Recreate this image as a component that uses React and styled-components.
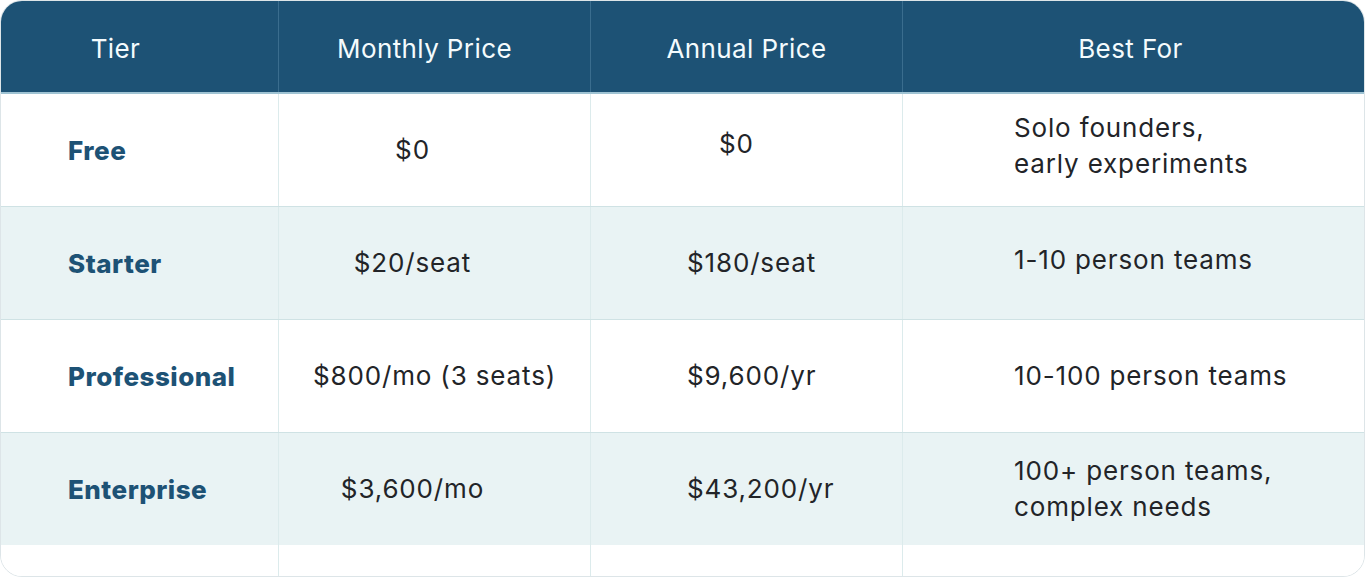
import React from "react";
import styled, { createGlobalStyle } from "styled-components";

const GlobalStyle = createGlobalStyle`
  html, body {
    margin: 0;
    padding: 0;
    background: #ffffff;
  }
  body {
    font-family: Inter, "Open Sans", "Liberation Sans", sans-serif;
    -webkit-font-smoothing: antialiased;
  }
`;

const COLS = "277px 312px 312px 1fr";

const rows = [
  { tier: "Free", monthly: "$0", annual: "$0", annualNudge: 32, annualLift: 12, best: ["Solo founders,", "early experiments"], bestLift: 8 },
  { tier: "Starter", monthly: "$20/seat", annual: "$180/seat", best: ["1-10 person teams"], bestLift: 6 },
  { tier: "Professional", monthly: "$800/mo (3 seats)", monthlyNudge: 27, annual: "$9,600/yr", best: ["10-100 person teams"] },
  { tier: "Enterprise", monthly: "$3,600/mo", annual: "$43,200/yr", best: ["100+ person teams,", "complex needs"] },
];

const Table = styled.div`
  width: 1365px;
  height: 577px;
  box-sizing: border-box;
  border: 1px solid #dde5e8;
  border-radius: 22px;
  overflow: hidden;
  display: flex;
  flex-direction: column;
  background: #ffffff;
`;

const HeadRow = styled.div`
  display: grid;
  grid-template-columns: ${COLS};
  height: 93px;
  flex: none;
  background: #1d5275;
  border-bottom: 2px solid #9fc3d3;
  box-sizing: border-box;
`;

const HeadCell = styled.div`
  display: flex;
  align-items: center;
  justify-content: center;
  padding-right: ${(p) => p.$shift || 0}px;
  padding-top: 4px;
  color: #f4fbfd;
  font-size: 26px;
  font-weight: 400;
  letter-spacing: 0.4px;
  & + & {
    border-left: 1px solid #3a6d8e;
  }
`;

const BodyRow = styled.div`
  display: grid;
  grid-template-columns: ${COLS};
  height: ${(p) => p.$h}px;
  flex: none;
  background: ${(p) => (p.$shaded ? "#e9f3f4" : "#ffffff")};
  border-top: ${(p) => (p.$first ? "none" : "1px solid #cfe2e4")};
  box-sizing: border-box;
`;

const Filler = styled(BodyRow)`
  flex: 1;
  border-top: none;
`;

const Cell = styled.div`
  display: flex;
  flex-direction: column;
  align-items: ${(p) => (p.$align === "center" ? "center" : "flex-start")};
  justify-content: center;
  padding-left: ${(p) => p.$pl || 0}px;
  padding-right: ${(p) => p.$pr || 0}px;
  padding-bottom: ${(p) => p.$lift || 0}px;
  & + & {
    border-left: 1px solid #dcebec;
  }
`;

const TierName = styled.span`
  color: #1d5275;
  font-size: 26px;
  font-weight: 800;
  letter-spacing: 0.5px;
  padding-top: 1px;
`;

const Value = styled.span`
  color: #222428;
  font-size: 26px;
  font-weight: 400;
  letter-spacing: 0.85px;
  line-height: 36px;
  white-space: nowrap;
`;

export default function App() {
  return (
    <>
      <GlobalStyle />
      <Table>
        <HeadRow>
          <HeadCell $shift={48}>Tier</HeadCell>
          <HeadCell $shift={20}>Monthly Price</HeadCell>
          <HeadCell>Annual Price</HeadCell>
          <HeadCell $shift={6}>Best For</HeadCell>
        </HeadRow>
        {rows.map((r, i) => (
          <BodyRow key={r.tier} $h={i === 0 ? 112 : 113} $shaded={i % 2 === 1} $first={i === 0}>
            <Cell $pl={67}>
              <TierName>{r.tier}</TierName>
            </Cell>
            <Cell $align="center" $pr={44 - (r.monthlyNudge || 0) * 2}>
              <Value>{r.monthly}</Value>
            </Cell>
            <Cell $pl={96 + (r.annualNudge || 0)} $lift={r.annualLift}>
              <Value>{r.annual}</Value>
            </Cell>
            <Cell $pl={111} $lift={r.bestLift}>
              {r.best.map((line) => (
                <Value key={line}>{line}</Value>
              ))}
            </Cell>
          </BodyRow>
        ))}
        <Filler $shaded={false}>
          <Cell />
          <Cell />
          <Cell />
          <Cell />
        </Filler>
      </Table>
    </>
  );
}
